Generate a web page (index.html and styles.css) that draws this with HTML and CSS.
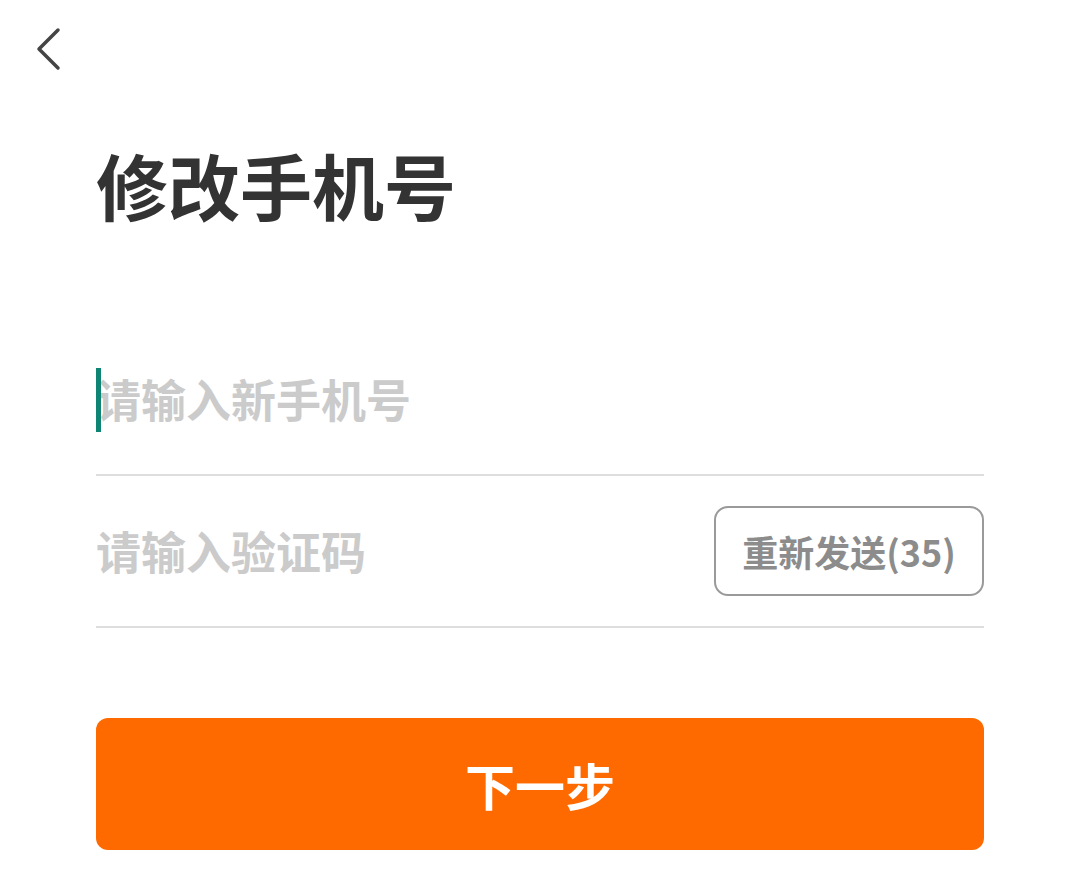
FILE: index.html
```html
<!DOCTYPE html>
<html lang="zh-CN">
<head>
<meta charset="utf-8">
<title>修改手机号</title>
<link rel="stylesheet" href="styles.css">
</head>
<body>
<div class="page">
  <header class="topbar">
    <button class="back" aria-label="返回">
      <svg width="40" height="60" viewBox="0 0 40 60"><polyline points="36,10 17,29 36,48" fill="none" stroke="#444" stroke-width="3.5" stroke-linecap="round" stroke-linejoin="round"/></svg>
    </button>
  </header>
  <main class="content">
    <h1 class="title">修改手机号</h1>
    <div class="form">
      <div class="field">
        <span class="cursor"></span>
        <span class="placeholder">请输入新手机号</span>
      </div>
      <div class="field">
        <span class="placeholder">请输入验证码</span>
        <button class="resend">重新发送(35)</button>
      </div>
    </div>
    <button class="next">下一步</button>
  </main>
</div>
</body>
</html>
```

FILE: styles.css
```css
* { box-sizing: border-box; }
html, body { margin: 0; padding: 0; background: #fff; }
body {
  font-family: "Noto Sans CJK SC", "Noto Sans", sans-serif;
  width: 1080px;
  height: 896px;
  overflow: hidden;
}
.page { display: flex; flex-direction: column; }
.topbar {
  height: 100px;
  display: flex;
  align-items: flex-start;
  padding: 20px 0 0 22px;
}
.back {
  border: 0;
  background: none;
  padding: 0;
  width: 40px;
  height: 60px;
  display: block;
}
.back svg { display: block; }
.content {
  padding: 0 96px;
  display: flex;
  flex-direction: column;
}
.title {
  margin: 48px 0 0 0;
  height: 72px;
  line-height: 72px;
  font-size: 72px;
  font-weight: 700;
  color: #333;
  letter-spacing: 0;
}
.form { margin-top: 104px; display: flex; flex-direction: column; }
.field {
  position: relative;
  height: 152px;
  border-bottom: 2px solid #dedede;
  display: flex;
  align-items: center;
  justify-content: space-between;
}
.placeholder {
  font-size: 45px;
  line-height: 60px;
  font-weight: 700;
  color: #cbcbcb;
}
.cursor {
  position: absolute;
  left: 0;
  top: 44px;
  width: 5px;
  height: 64px;
  background: #0e8574;
}
.resend {
  width: 270px;
  height: 90px;
  border: 2px solid #9a9a9a;
  border-radius: 14px;
  background: #fff;
  font-family: "Noto Sans CJK SC", "Noto Sans", sans-serif;
  font-size: 36px;
  font-weight: 700;
  color: #8c8c8c;
  padding: 0;
}
.next {
  margin-top: 90px;
  height: 132px;
  border: 0;
  border-radius: 12px;
  background: #ff6a00;
  color: #fff;
  font-family: "Noto Sans CJK SC", "Noto Sans", sans-serif;
  font-size: 50px;
  font-weight: 700;
}
```
